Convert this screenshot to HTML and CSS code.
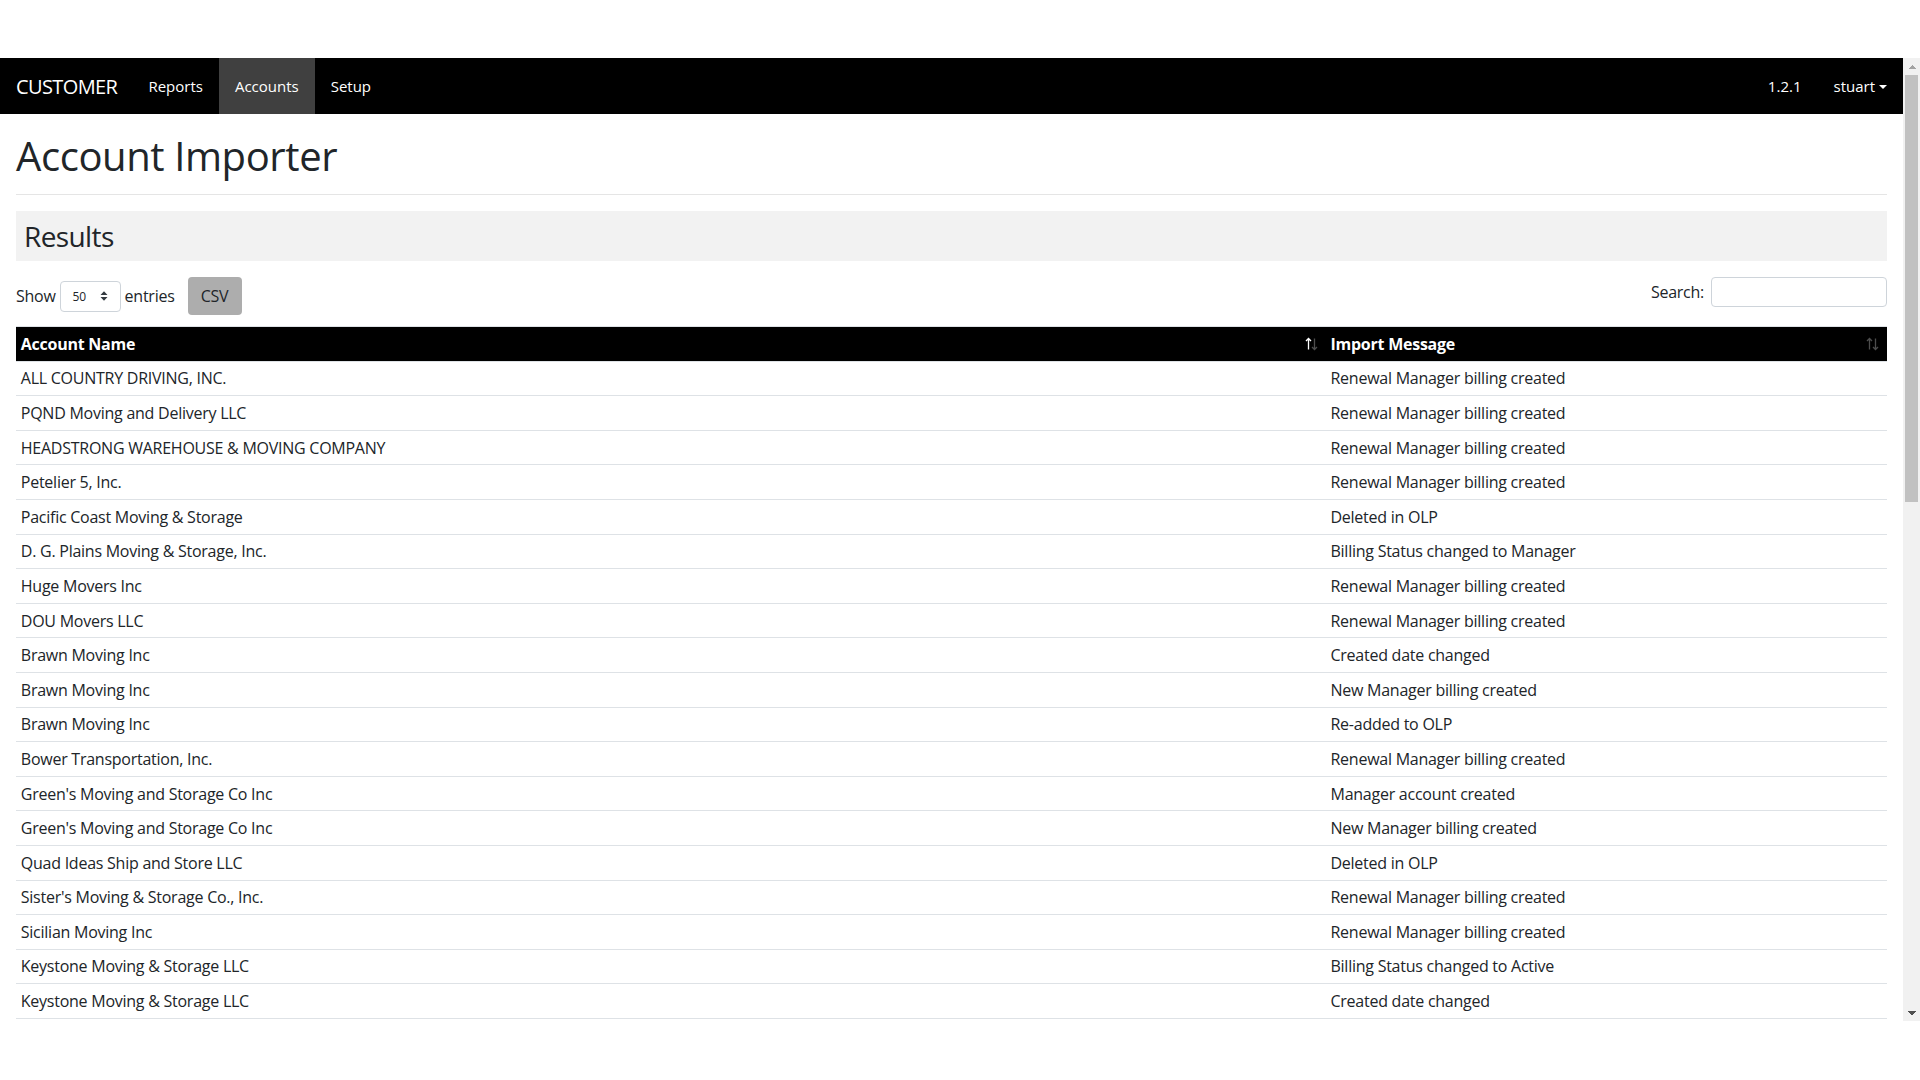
FILE: index.html
```html
<!DOCTYPE html>
<html lang="en">
<head>
    <meta charset="UTF-8">
    <meta name="viewport" content="width=device-width, initial-scale=1.0">
    <title>Account Importer</title>
    <link rel="stylesheet" href="styles.css">
</head>
<body>

    <div class="topGap"></div>

    <div class="frame">
        <div class="page">

            <nav class="navBar">
                <span class="brand">CUSTOMER</span>
                <a class="navLink">Reports</a>
                <a class="navLink active">Accounts</a>
                <a class="navLink">Setup</a>

                <div class="navRight">
                    <a class="navLink">1.2.1</a>
                    <a class="navLink">stuart <span class="caret"></span></a>
                </div>
            </nav>

            <div class="mainContainer">
                <div class="pageHeader">
                    <h1>Account Importer</h1>
                </div>

                <div class="resultsBar">
                    <h2>Results</h2>
                </div>

                <div class="controls">
                    <div class="lengthControl">
                        <span>Show</span>
                        <div class="selectBox">
                            <span>50</span>
                            <svg width="8" height="12" viewBox="0 0 8 12">
                                <path d="M0.5 5 L4 1.2 L7.5 5 Z M0.5 7 L4 10.8 L7.5 7 Z" fill="#343a40"/>
                            </svg>
                        </div>
                        <span>entries</span>
                        <button class="csvButton">CSV</button>
                    </div>

                    <div class="searchControl">
                        <label for="search">Search:</label>
                        <input type="text" id="search">
                    </div>
                </div>

                <table id="mainList">
                    <tr>
                        <th class="col1">
                            <div class="thInner">
                                <span>Account Name</span>
                                <svg class="sortIcon" width="13" height="14" viewBox="0 0 13 14">
                                    <path d="M3.5 1.5 V12.5 M1 4 L3.5 1.5 L6 4" stroke="#ffffff" stroke-width="1.3" fill="none"/>
                                    <path d="M9.5 1.5 V12.5 M7 10 L9.5 12.5 L12 10" stroke="#4d4d4d" stroke-width="1.3" fill="none"/>
                                </svg>
                            </div>
                        </th>
                        <th class="col2">
                            <div class="thInner">
                                <span>Import Message</span>
                                <svg class="sortIcon" width="13" height="14" viewBox="0 0 13 14">
                                    <path d="M3.5 1.5 V12.5 M1 4 L3.5 1.5 L6 4" stroke="#4d4d4d" stroke-width="1.3" fill="none"/>
                                    <path d="M9.5 1.5 V12.5 M7 10 L9.5 12.5 L12 10" stroke="#4d4d4d" stroke-width="1.3" fill="none"/>
                                </svg>
                            </div>
                        </th>
                    </tr>
                    <tr><td>ALL COUNTRY DRIVING, INC.</td><td>Renewal Manager billing created</td></tr>
                    <tr><td>PQND Moving and Delivery LLC</td><td>Renewal Manager billing created</td></tr>
                    <tr><td>HEADSTRONG WAREHOUSE &amp; MOVING COMPANY</td><td>Renewal Manager billing created</td></tr>
                    <tr><td>Petelier 5, Inc.</td><td>Renewal Manager billing created</td></tr>
                    <tr><td>Pacific Coast Moving &amp; Storage</td><td>Deleted in OLP</td></tr>
                    <tr><td>D. G. Plains Moving &amp; Storage, Inc.</td><td>Billing Status changed to Manager</td></tr>
                    <tr><td>Huge Movers Inc</td><td>Renewal Manager billing created</td></tr>
                    <tr><td>DOU Movers LLC</td><td>Renewal Manager billing created</td></tr>
                    <tr><td>Brawn Moving Inc</td><td>Created date changed</td></tr>
                    <tr><td>Brawn Moving Inc</td><td>New Manager billing created</td></tr>
                    <tr><td>Brawn Moving Inc</td><td>Re-added to OLP</td></tr>
                    <tr><td>Bower Transportation, Inc.</td><td>Renewal Manager billing created</td></tr>
                    <tr><td>Green's Moving and Storage Co Inc</td><td>Manager account created</td></tr>
                    <tr><td>Green's Moving and Storage Co Inc</td><td>New Manager billing created</td></tr>
                    <tr><td>Quad Ideas Ship and Store LLC</td><td>Deleted in OLP</td></tr>
                    <tr><td>Sister's Moving &amp; Storage Co., Inc.</td><td>Renewal Manager billing created</td></tr>
                    <tr><td>Sicilian Moving Inc</td><td>Renewal Manager billing created</td></tr>
                    <tr><td>Keystone Moving &amp; Storage LLC</td><td>Billing Status changed to Active</td></tr>
                    <tr><td>Keystone Moving &amp; Storage LLC</td><td>Created date changed</td></tr>
                    <tr><td>&nbsp;</td><td>&nbsp;</td></tr>
                </table>
            </div>

        </div>

        <div class="scrollBar">
            <div class="sbButton sbUp"></div>
            <div class="sbThumb"></div>
            <div class="sbTrack"></div>
            <div class="sbButton sbDown"></div>
        </div>
    </div>

</body>
</html>
```

FILE: styles.css
```css
* {
    margin: 0;
    padding: 0;
    box-sizing: border-box;
}

body {
    font-family: "Open Sans", "Noto Sans", sans-serif;
    font-size: 16px;
    letter-spacing: -0.25px;
    color: #212529;
    background-color: #ffffff;
}

.topGap {
    height: 58px;
}

.frame {
    display: flex;
    height: 963px;
}

.page {
    flex: 1;
    overflow: hidden;
}

/* fake browser scrollbar */
.scrollBar {
    width: 17px;
    background-color: #f1f1f1;
    display: flex;
    flex-direction: column;
}

.sbButton {
    height: 17px;
}

.sbUp {
    background: conic-gradient(from 135deg at 50% 0, #a3a3a3 90deg, transparent 0) center / 8px 4px no-repeat;
}

.sbDown {
    background: conic-gradient(from -45deg at 50% 100%, #505050 90deg, transparent 0) center / 8px 4px no-repeat;
}

.sbThumb {
    height: 427px;
    margin: 0 2px;
    background-color: #c1c1c1;
}

.sbTrack {
    flex: 1;
}

/* nav */
.navBar {
    height: 56px;
    background-color: #000000;
    display: flex;
    align-items: stretch;
    padding-left: 16px;
}

.brand {
    color: #ffffff;
    font-size: 20px;
    letter-spacing: -0.6px;
    display: flex;
    align-items: center;
    margin-right: 15px;
}

.navLink {
    color: #ffffff;
    display: flex;
    align-items: center;
    padding: 0 16px;
    font-size: 15px;
    letter-spacing: 0;
}

.navLink.active {
    background-color: #404040;
}

.navRight {
    margin-left: auto;
    display: flex;
}

.caret {
    display: inline-block;
    margin-left: 4px;
    border-top: 4px solid #ffffff;
    border-left: 4px solid transparent;
    border-right: 4px solid transparent;
    margin-top: 1px;
}

/* content */
.mainContainer {
    padding: 0 16px;
}

.pageHeader {
    margin-top: 18px;
    padding-bottom: 14px;
    border-bottom: 1px solid #e5e5e5;
}

.pageHeader h1 {
    font-size: 40px;
    font-weight: 500;
    letter-spacing: -0.4px;
    line-height: 48px;
}

.resultsBar {
    margin-top: 16px;
    height: 50px;
    background-color: #f2f2f2;
    display: flex;
    align-items: center;
    padding-left: 8px;
}

.resultsBar h2 {
    font-size: 28px;
    font-weight: 500;
    letter-spacing: -0.6px;
    line-height: 36px;
}

.controls {
    margin-top: 16px;
    margin-bottom: 11px;
    height: 38px;
    display: flex;
    justify-content: space-between;
    align-items: flex-start;
}

.lengthControl {
    display: flex;
    align-items: center;
    height: 38px;
}

.selectBox {
    width: 61px;
    height: 31px;
    margin: 0 4px;
    border: 1px solid #ced4da;
    border-radius: 4px;
    display: flex;
    align-items: center;
    justify-content: space-between;
    padding: 0 12px 0 12px;
    font-size: 12px;
}

.csvButton {
    margin-left: 13px;
    width: 54px;
    height: 38px;
    border: none;
    border-radius: 4px;
    background-color: #adadad;
    color: #212529;
    font-family: inherit;
    font-size: 16px;
    letter-spacing: inherit;
}

.searchControl {
    display: flex;
    align-items: center;
    height: 30px;
}

.searchControl input {
    margin-left: 7px;
    width: 176px;
    height: 30px;
    border: 1px solid #ced4da;
    border-radius: 4px;
}

#mainList {
    width: 100%;
    border-collapse: collapse;
}

#mainList th {
    background-color: #000000;
    color: #ffffff;
    text-align: left;
    font-weight: 700;
    padding: 4.8px;
    line-height: 24px;
    border-top: 1px solid #dee2e6;
}

#mainList td {
    padding: 4.8px;
    line-height: 24px;
    border-top: 1px solid #dee2e6;
}

.thInner {
    display: flex;
    justify-content: space-between;
    align-items: center;
}

.sortIcon {
    margin-right: 3px;
}

.col1 {
    width: 70%;
}

.col2 {
    width: 30%;
}
```
